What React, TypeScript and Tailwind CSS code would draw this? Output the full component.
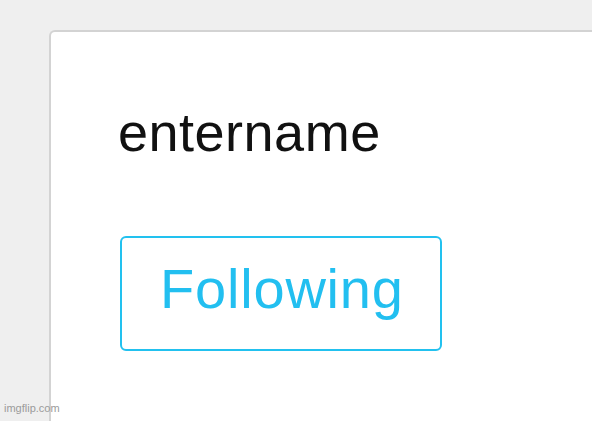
export default function App() {
  return (
    <div className="relative w-[592px] h-[421px] overflow-hidden bg-[#efefef] pl-[49px] pt-[30px] font-['Liberation_Sans',Arial,sans-serif]">
      {/* Profile card */}
      <div className="h-[420px] bg-white border-l-2 border-t-2 border-[#d3d3d3] rounded-tl-[6px] pl-[67px] pt-[73px]">
        <div className="text-[54px] leading-none tracking-[0.5px] text-[#111111]">entername</div>
        <button className="ml-[2px] mt-[77px] w-[322px] h-[115px] border-2 border-[#22c1ef] rounded-[6px] pl-[38px] pt-[20px] pb-[30px] text-left text-[56px] leading-none tracking-[0.8px] text-[#22bff0]">
          Following
        </button>
      </div>

      {/* Watermark */}
      <span className="absolute left-[4px] top-[403px] text-[11px] leading-none text-[#9b9b9b]">imgflip.com</span>
    </div>
  );
}
